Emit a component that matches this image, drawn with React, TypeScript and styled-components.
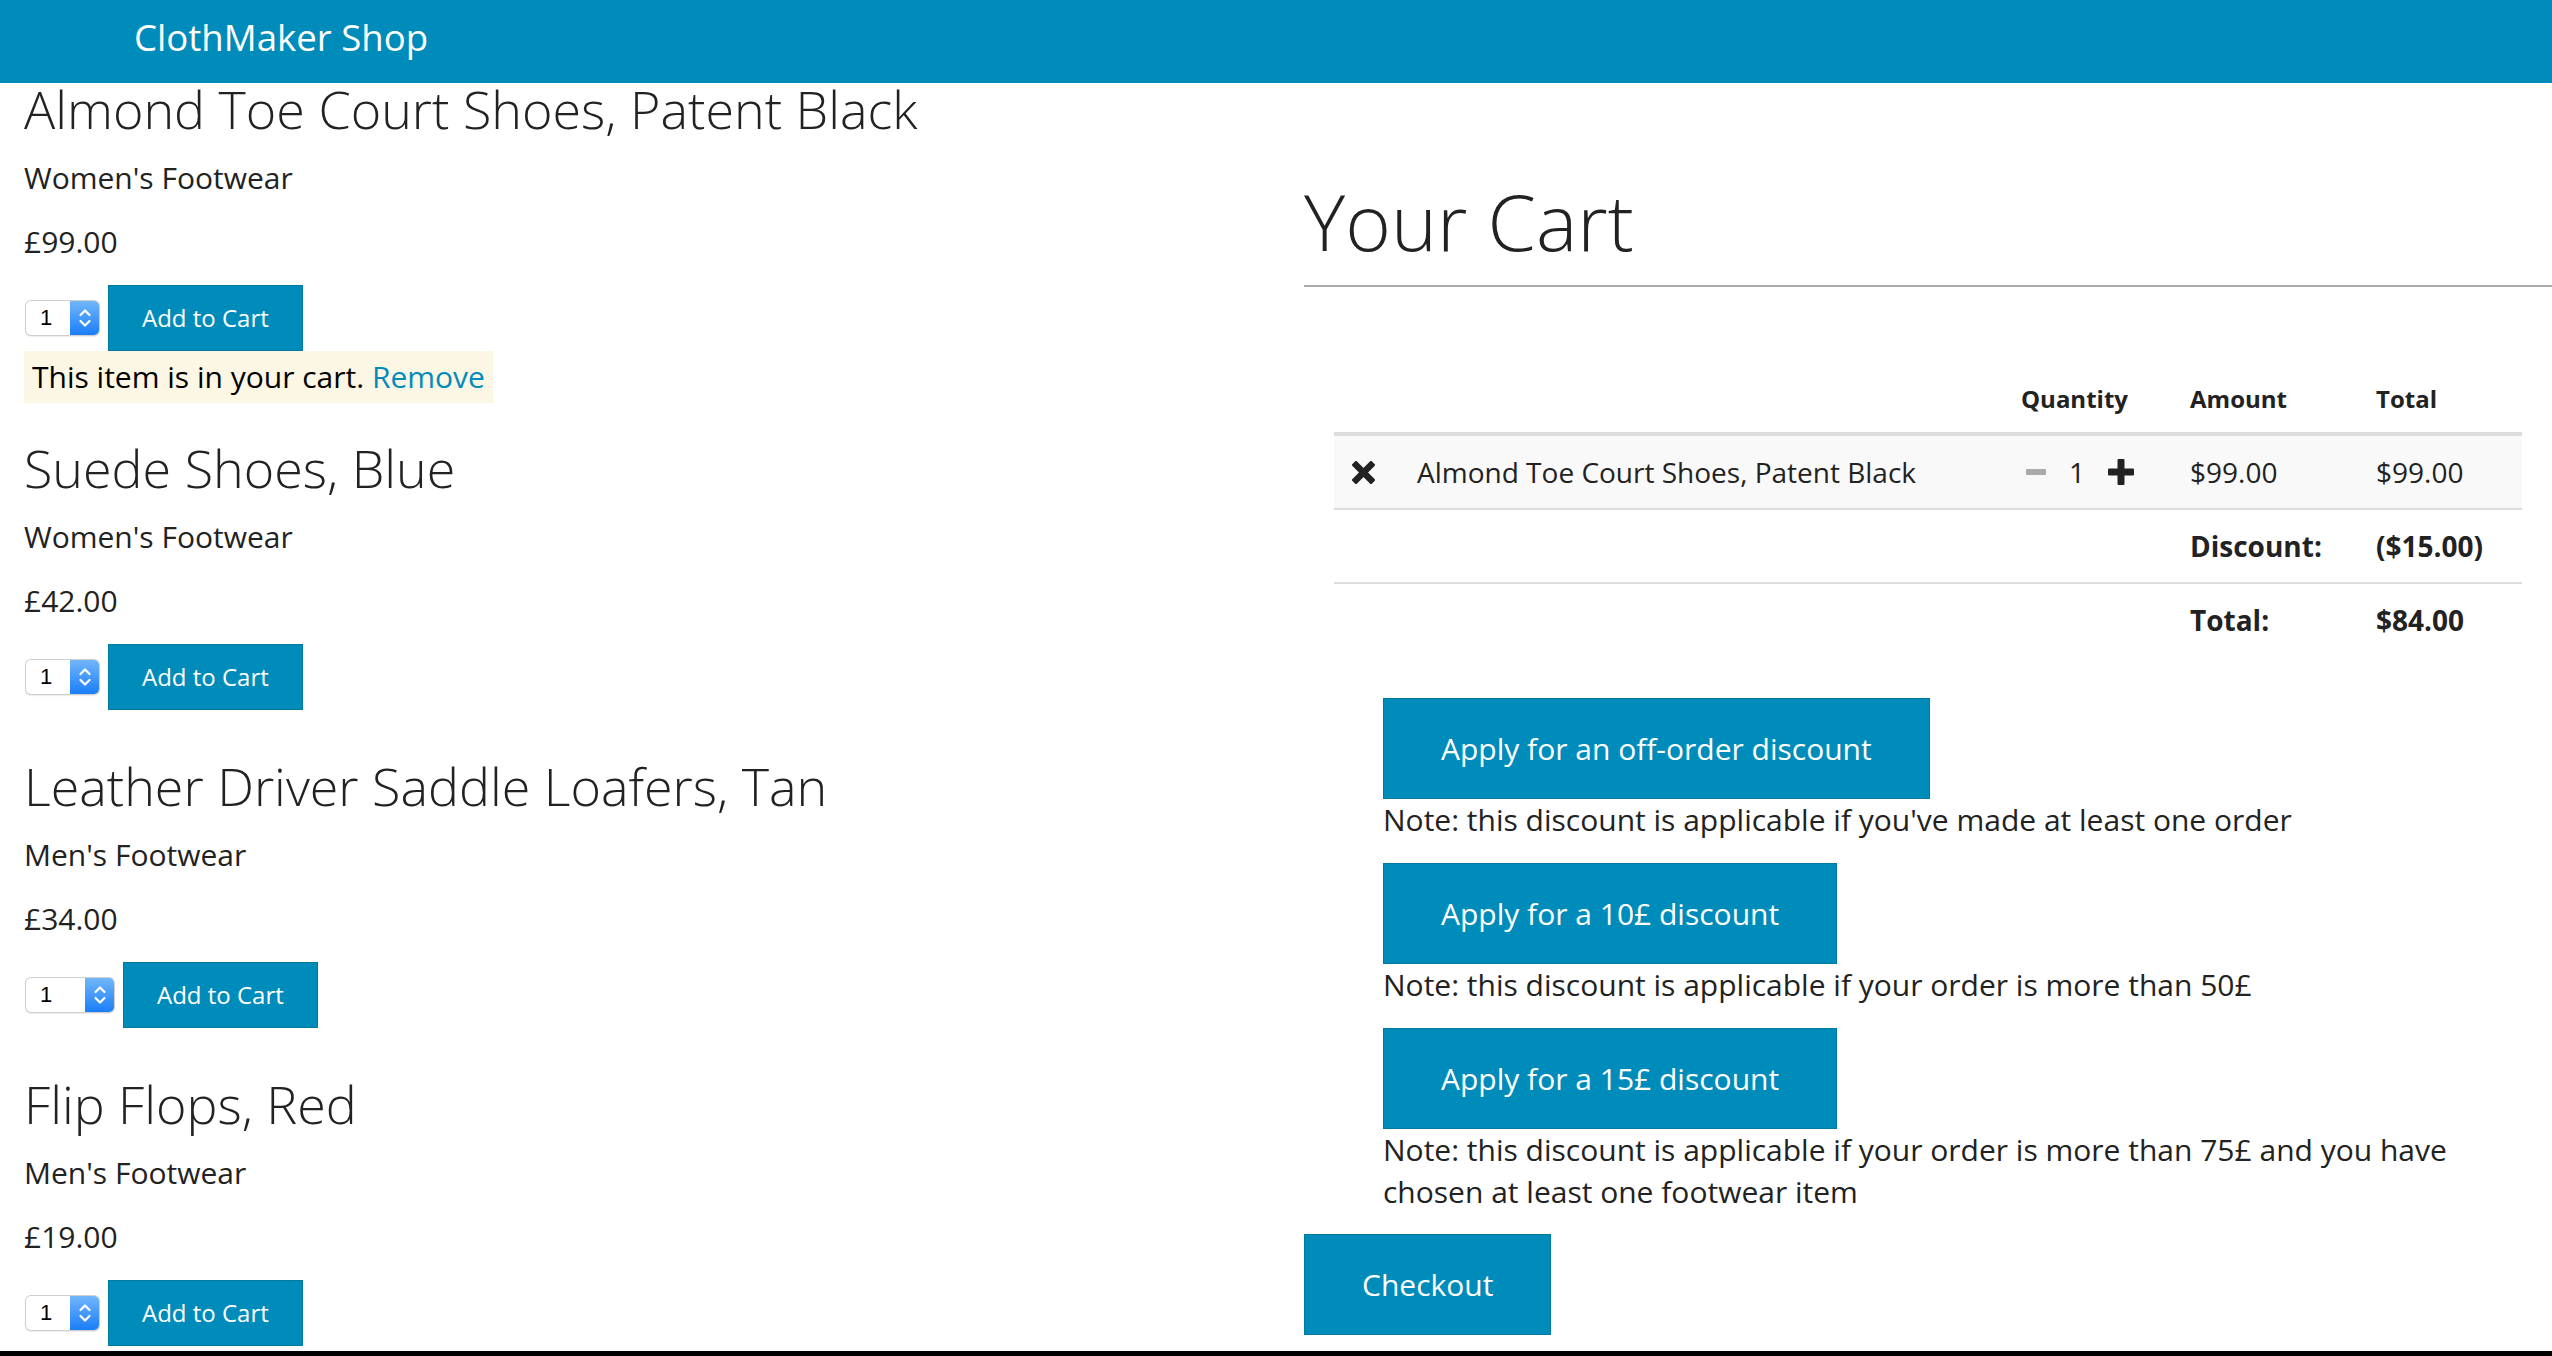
import React from 'react';
import styled, { createGlobalStyle } from 'styled-components';

const GlobalStyle = createGlobalStyle`
	html, body {
		margin: 0;
		padding: 0;
		overflow: hidden;
		background: #fff;
	}
	body {
		font-family: "Open Sans", "Liberation Sans", sans-serif;
		color: #222;
	}
`;

const Header = styled.header`
	height: 83px;
	background: #008cba;
	padding-left: 134px;
`;

const Brand = styled.a`
	display: inline-block;
	font-size: 36.6px;
	line-height: 75px;
	color: #fff;
	text-decoration: none;
`;

const Layout = styled.main`
	display: grid;
	grid-template-columns: 1280px 1fr;
	align-items: start;
	padding-left: 24px;
`;

const ProductList = styled.section`
	display: flex;
	flex-direction: column;
	gap: 39px;
`;

const Product = styled.article`
	display: flex;
	flex-direction: column;
	align-items: flex-start;
`;

const ProductName = styled.h2`
	margin: 0;
	font-size: 52px;
	line-height: 52px;
	font-weight: 300;
`;

const Meta = styled.p`
	margin: 22px 0 0;
	font-size: 30px;
	line-height: 42px;
`;

const Actions = styled.form<{ $spaced: boolean }>`
	display: flex;
	align-items: center;
	gap: 9px;
	margin: 22px 0 ${(p) => (p.$spaced ? 11 : 0)}px;
`;

const QtySelect = styled.div<{ $wide?: boolean }>`
	display: flex;
	width: ${(p) => (p.$wide ? 88 : 73)}px;
	height: 34px;
	margin-left: 2px;
	border-radius: 5px;
	overflow: hidden;
	background: #fff;
	box-shadow: 0 0 0 1px #cfcfcf, 0 1px 2px rgba(0, 0, 0, 0.25);
`;

const QtyValue = styled.span`
	flex: 1;
	padding-left: 14px;
	font-family: "Liberation Sans", sans-serif;
	font-size: 22px;
	line-height: 34px;
	color: #000;
`;

const QtyArrows = styled.span`
	width: 29px;
	display: flex;
	align-items: center;
	justify-content: center;
	background: linear-gradient(#72b6fb, #1a7ef8);
`;

const Button = styled.button<{ $size: 'small' | 'large' }>`
	font-family: inherit;
	color: #fff;
	background: #008cba;
	border: 1px solid #0078a0;
	border-radius: 0;
	cursor: pointer;
	white-space: nowrap;
	font-size: ${(p) => (p.$size === 'small' ? 24 : 30)}px;
	line-height: ${(p) => (p.$size === 'small' ? 34 : 41)}px;
	padding: ${(p) => (p.$size === 'small' ? '15px 33px' : '29px 57px')};
`;

const Notice = styled.p`
	margin: 0;
	padding: 0 8px;
	background: #fcf6e4;
	font-size: 30px;
	line-height: 52px;
	color: #000;
`;

const RemoveLink = styled.a`
	color: #008cba;
	text-decoration: none;
`;

const Cart = styled.section`
	padding-top: 95px;
`;

const CartTitle = styled.h1`
	margin: 0;
	font-size: 78px;
	line-height: 86px;
	font-weight: 300;
`;

const Rule = styled.hr`
	margin: 21px 0 0;
	border: 0;
	height: 2px;
	background: #aaa;
`;

const Table = styled.div`
	margin: 79px 0 0 30px;
	width: 1188px;
`;

const TableRow = styled.div<{ $shaded?: boolean; $rule?: number }>`
	display: grid;
	grid-template-columns: 65px 604px 169px 186px 164px;
	background: ${(p) => (p.$shaded ? '#f9f9f9' : 'transparent')};
	border-bottom: ${(p) => p.$rule ?? 0}px solid #ddd;
`;

const Cell = styled.div<{ $strong?: boolean }>`
	display: flex;
	align-items: center;
	padding: 16px 0 16px 18px;
	font-size: 28px;
	line-height: 40px;
	font-weight: ${(p) => (p.$strong ? 700 : 400)};
`;

const HeadCell = styled(Cell)`
	font-size: 24px;
	line-height: 34px;
	font-weight: 700;
`;

const QtyControl = styled.div`
	display: flex;
	align-items: center;
	gap: 23px;
	margin-left: 5px;
`;

const IconButton = styled.span`
	display: inline-flex;
	cursor: pointer;
`;

const Discounts = styled.div`
	display: flex;
	flex-direction: column;
	align-items: flex-start;
	gap: 22px;
	margin: 42px 0 0 79px;
	max-width: 1110px;
`;

const Offer = styled.div`
	display: flex;
	flex-direction: column;
	align-items: flex-start;
`;

const Note = styled.p`
	margin: 0;
	font-size: 30px;
	line-height: 42px;
`;

const CheckoutRow = styled.div`
	margin-top: 21px;
`;

const WindowEdge = styled.div`
	position: fixed;
	left: 0;
	right: 0;
	bottom: 0;
	height: 5px;
	background: #000;
`;

const Chevrons = () => (
	<svg width="14" height="24" viewBox="0 0 14 24">
		<path d="M2.5 9 L7 4.5 L11.5 9 M2.5 15 L7 19.5 L11.5 15" fill="none" stroke="#fff" strokeWidth="2.2" strokeLinecap="round" strokeLinejoin="round" />
	</svg>
);

const TimesIcon = () => (
	<svg width="23" height="23" viewBox="0 0 23 23">
		<path d="M4 4 L19 19 M19 4 L4 19" stroke="#222" strokeWidth="6.5" strokeLinecap="square" />
	</svg>
);

const MinusIcon = () => (
	<svg width="20" height="6" viewBox="0 0 20 6">
		<rect x="0" y="0" width="20" height="6" rx="1" fill="#aaa" />
	</svg>
);

const PlusIcon = () => (
	<svg width="26" height="26" viewBox="0 0 26 26">
		<rect x="9.5" y="0" width="7" height="26" rx="1" fill="#222" />
		<rect x="0" y="9.5" width="26" height="7" rx="1" fill="#222" />
	</svg>
);

type Item = { name: string; category: string; price: string; inCart?: boolean; wideSelect?: boolean };

const products: Item[] = [
	{ name: 'Almond Toe Court Shoes, Patent Black', category: "Women's Footwear", price: '£99.00', inCart: true },
	{ name: 'Suede Shoes, Blue', category: "Women's Footwear", price: '£42.00' },
	{ name: 'Leather Driver Saddle Loafers, Tan', category: "Men's Footwear", price: '£34.00', wideSelect: true },
	{ name: 'Flip Flops, Red', category: "Men's Footwear", price: '£19.00' },
];

const offers = [
	{ label: 'Apply for an off-order discount', note: "Note: this discount is applicable if you've made at least one order" },
	{ label: 'Apply for a 10£ discount', note: 'Note: this discount is applicable if your order is more than 50£' },
	{
		label: 'Apply for a 15£ discount',
		note: 'Note: this discount is applicable if your order is more than 75£ and you have chosen at least one footwear item',
	},
];

const App = () => (
	<>
		<GlobalStyle />
		<Header>
			<Brand href="#">ClothMaker Shop</Brand>
		</Header>
		<Layout>
			<ProductList>
				{products.map((item) => (
					<Product key={item.name}>
						<ProductName>{item.name}</ProductName>
						<Meta>{item.category}</Meta>
						<Meta>{item.price}</Meta>
						<Actions $spaced={!item.inCart} onSubmit={(e) => e.preventDefault()}>
							<QtySelect $wide={item.wideSelect}>
								<QtyValue>1</QtyValue>
								<QtyArrows>
									<Chevrons />
								</QtyArrows>
							</QtySelect>
							<Button $size="small" type="submit">
								Add to Cart
							</Button>
						</Actions>
						{item.inCart && (
							<Notice>
								This item is in your cart. <RemoveLink href="#">Remove</RemoveLink>
							</Notice>
						)}
					</Product>
				))}
			</ProductList>

			<Cart>
				<CartTitle>Your Cart</CartTitle>
				<Rule />
				<Table>
					<TableRow $rule={4}>
						<HeadCell />
						<HeadCell />
						<HeadCell>Quantity</HeadCell>
						<HeadCell>Amount</HeadCell>
						<HeadCell>Total</HeadCell>
					</TableRow>
					<TableRow $shaded $rule={2}>
						<Cell>
							<IconButton>
								<TimesIcon />
							</IconButton>
						</Cell>
						<Cell>Almond Toe Court Shoes, Patent Black</Cell>
						<Cell>
							<QtyControl>
								<IconButton>
									<MinusIcon />
								</IconButton>
								<span>1</span>
								<IconButton>
									<PlusIcon />
								</IconButton>
							</QtyControl>
						</Cell>
						<Cell>$99.00</Cell>
						<Cell>$99.00</Cell>
					</TableRow>
					<TableRow $rule={2}>
						<Cell />
						<Cell />
						<Cell />
						<Cell $strong>Discount:</Cell>
						<Cell $strong>($15.00)</Cell>
					</TableRow>
					<TableRow>
						<Cell />
						<Cell />
						<Cell />
						<Cell $strong>Total:</Cell>
						<Cell $strong>$84.00</Cell>
					</TableRow>
				</Table>

				<Discounts>
					{offers.map((offer) => (
						<Offer key={offer.label}>
							<Button $size="large">{offer.label}</Button>
							<Note>{offer.note}</Note>
						</Offer>
					))}
				</Discounts>

				<CheckoutRow>
					<Button $size="large">Checkout</Button>
				</CheckoutRow>
			</Cart>
		</Layout>
		<WindowEdge />
	</>
);

export default App;
